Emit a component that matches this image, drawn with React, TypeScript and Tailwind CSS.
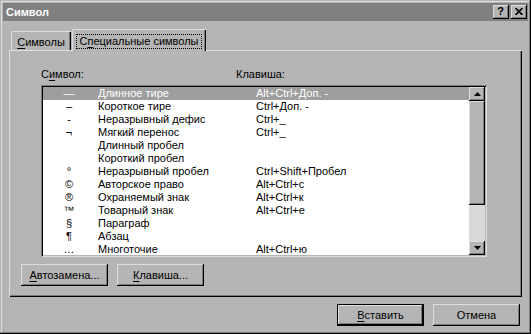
import React from 'react';

const raised = 'shadow-[inset_-1px_-1px_#000,inset_1px_1px_#dedede,inset_-2px_-2px_#7b7b7b]';

const rows: [string, string, string][] = [
  ['—', 'Длинное тире', 'Alt+Ctrl+Доп. -'],
  ['–', 'Короткое тире', 'Ctrl+Доп. -'],
  ['-', 'Неразрывный дефис', 'Ctrl+_'],
  ['¬', 'Мягкий перенос', 'Ctrl+_'],
  ['', 'Длинный пробел', ''],
  ['', 'Короткий пробел', ''],
  ['°', 'Неразрывный пробел', 'Ctrl+Shift+Пробел'],
  ['©', 'Авторское право', 'Alt+Ctrl+c'],
  ['®', 'Охраняемый знак', 'Alt+Ctrl+к'],
  ['™', 'Товарный знак', 'Alt+Ctrl+e'],
  ['§', 'Параграф', ''],
  ['¶', 'Абзац', ''],
  ['…', 'Многоточие', 'Alt+Ctrl+ю'],
];

const Arrow = ({ up }: { up?: boolean }) => (
  <svg width="7" height="4" viewBox="0 0 7 4">
    <path d={up ? 'M3.5 0 L7 4 L0 4 Z' : 'M0 0 L7 0 L3.5 4 Z'} fill="#000" />
  </svg>
);

const Btn = ({ u, rest, def }: { u: string; rest: string; def?: boolean }) => (
  <div
    className={
      'w-[87px] h-[22px] flex items-center justify-center bg-[#b5b5b5] text-black ' +
      (def
        ? 'shadow-[inset_0_0_0_1px_#000,inset_-2px_-2px_#000,inset_2px_2px_#dedede,inset_-3px_-3px_#7b7b7b]'
        : raised)
    }
  >
    <span>
      <span className="underline underline-offset-[2px]">{u}</span>
      {rest}
    </span>
  </div>
);

export default function App() {
  return (
    <div
      className="w-[531px] h-[334px] bg-[#b5b5b5] p-[3px] flex flex-col text-[11px] leading-[13px] text-black shadow-[inset_-1px_-1px_#000,inset_1px_1px_#b5b5b5,inset_-2px_-2px_#7b7b7b,inset_2px_2px_#dedede]"
      style={{ fontFamily: '"Liberation Sans", Arial, sans-serif' }}
    >
      {/* title bar */}
      <div className="h-[18px] bg-[#808080] flex items-center justify-between pl-[3px] pr-[1px]">
        <span className="text-white font-bold">Символ</span>
        <div className="flex gap-[2px]">
          <div className={'w-[16px] h-[14px] bg-[#b5b5b5] flex items-center justify-center font-bold ' + raised}>
            <span className="-mt-[1px] -ml-[1px]">?</span>
          </div>
          <div className={'w-[16px] h-[14px] bg-[#b5b5b5] flex items-center justify-center ' + raised}>
            <svg width="8" height="7" viewBox="0 0 8 7" className="-ml-[1px] -mt-[1px]">
              <path d="M0.5 0 L7.5 7 M7.5 0 L0.5 7" stroke="#000" strokeWidth="1.6" />
            </svg>
          </div>
        </div>
      </div>

      {/* tabs */}
      <div className="mt-[8px] ml-[8px] h-[21px] flex items-end">
        <div className="w-[60px] h-[19px] rounded-tl-[2px] flex justify-center pt-[5px] shadow-[inset_1px_0_#dedede,inset_0_1px_#dedede,inset_-1px_0_#000,inset_-2px_0_#7b7b7b]">
          <span>
            <span className="underline underline-offset-[2px]">С</span>имволы
          </span>
        </div>
        <div className="ml-[1px] w-[134px] h-[22px] -mb-[1px] relative z-10 bg-[#b5b5b5] rounded-tl-[2px] flex justify-center pt-[5px] shadow-[inset_1px_0_#dedede,inset_0_1px_#dedede,inset_-1px_0_#000,inset_-2px_0_#7b7b7b]">
          <span className="h-[15px] px-[2px] border border-dotted border-black">
            С<span className="underline underline-offset-[2px]">п</span>ециальные символы
          </span>
        </div>
      </div>

      {/* panel */}
      <div className="ml-[6px] w-[513px] h-[247px] pl-[12px] pt-[18px] flex flex-col shadow-[inset_1px_1px_#dedede,inset_-1px_-1px_#000,inset_-2px_-2px_#7b7b7b]">
        <div className="ml-[20px] flex h-[13px]">
          <span className="w-[195px]">
            С<span className="underline underline-offset-[2px]">и</span>мвол:
          </span>
          <span>Клавиша:</span>
        </div>

        <div className="ml-[20px] mt-[4px] w-[446px] h-[172px] p-[2px] flex bg-white shadow-[inset_1px_1px_#7b7b7b,inset_-1px_-1px_#dedede,inset_2px_2px_#000,inset_-2px_-2px_#b5b5b5]">
          <div className="flex-1 overflow-hidden">
            {rows.map(([sym, name, key], i) => (
              <div
                key={i}
                className={'h-[13px] flex ' + (i === 0 ? 'bg-[#9e9e9e] text-white' : '')}
              >
                <span className="w-[52px] text-center">{sym}</span>
                <span className="w-[161px] pl-[3px]">{name}</span>
                <span>{key}</span>
              </div>
            ))}
          </div>
          <div className="w-[16px] flex flex-col">
            <div className={'h-[14px] bg-[#b5b5b5] flex items-center justify-center ' + raised}>
              <Arrow up />
            </div>
            <div className={'h-[104px] bg-[#b5b5b5] ' + raised} />
            <div className="flex-1 bg-[#d9d9d9]" />
            <div className={'h-[14px] bg-[#b5b5b5] flex items-center justify-center ' + raised}>
              <Arrow />
            </div>
          </div>
        </div>

        <div className="mt-[7px] flex gap-[9px]">
          <Btn u="А" rest="втозамена..." />
          <Btn u="К" rest="лавиша..." />
        </div>
      </div>

      {/* dialog buttons */}
      <div className="mt-[7px] pr-[8px] flex justify-end gap-[9px]">
        <Btn u="В" rest="ставить" def />
        <Btn u="" rest="Отмена" />
      </div>
    </div>
  );
}
